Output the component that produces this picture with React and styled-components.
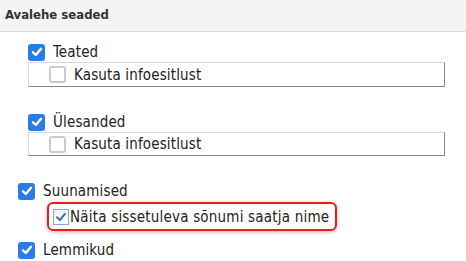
import React from "react";
import styled, { createGlobalStyle } from "styled-components";

const Global = createGlobalStyle`
  html, body { margin: 0; padding: 0; background: #fff; }
  body { font-family: "DejaVu Sans Condensed", "DejaVu Sans", sans-serif; color: #222; }
`;

const Page = styled.div`
  width: 466px;
  height: 261px;
  overflow: hidden;
  display: flex;
  flex-direction: column;
`;

const Header = styled.div`
  height: 32px;
  box-sizing: border-box;
  background: #f4f4f4;
  border-bottom: 1px solid #dcdcdc;
  display: flex;
  align-items: center;
  padding: 0 0 2px 5px;
  font-weight: bold;
  font-size: 13px;
  color: #333;
`;

const Content = styled.div`
  display: flex;
  flex-direction: column;
  padding: 10px 21px 0 18px;
`;

const Group = styled.div`
  display: flex;
  flex-direction: column;
  padding-left: 10px;
  margin-bottom: ${(p) => p.$gap || 0}px;
`;

const Row = styled.label`
  display: flex;
  align-items: center;
  height: 20px;
  gap: 8px;
  font-size: 15px;
  letter-spacing: 0.15px;
  margin-bottom: ${(p) => p.$gap || 0}px;
`;

const Box = styled.div`
  height: ${(p) => p.$h}px;
  box-sizing: border-box;
  border-top: 1px solid #dadada;
  border-left: 1px solid #dadada;
  border-right: 1px solid #888;
  border-bottom: 1px solid #888;
  display: flex;
  align-items: center;
  padding-left: 20px;
  gap: 8px;
  font-size: 15px;
  letter-spacing: 0.15px;
`;

const Check = styled.span`
  width: 17px;
  height: 17px;
  box-sizing: border-box;
  border-radius: 3px;
  flex: none;
  display: flex;
  align-items: center;
  justify-content: center;
  background: ${(p) => (p.$on ? "#2b7be6" : "#fff")};
  border: ${(p) => (p.$on ? "none" : "2px solid #cbcbcb")};
`;

const Highlight = styled.div`
  align-self: flex-start;
  margin-left: 29px;
  height: 29px;
  box-sizing: border-box;
  border: 2px solid #ee1c1c;
  border-radius: 6px;
  box-shadow: 0 1px 4px rgba(0, 0, 0, 0.3);
  display: flex;
  align-items: center;
  padding: 0 6px 0 4px;
  font-size: 15px;
  letter-spacing: 0.2px;
  margin-bottom: 9px;
`;

const ClassicCheck = styled.span`
  width: 16px;
  height: 16px;
  box-sizing: border-box;
  border: 1px solid #8da4c4;
  background: linear-gradient(#eef2f7, #ffffff);
  flex: none;
  display: flex;
  align-items: center;
  justify-content: center;
  margin-right: 1px;
`;

const Tick = ({ color = "#fff", w = 2.4 }) => (
  <svg width="12" height="12" viewBox="0 0 12 12">
    <path d="M2 6.3 L4.8 9 L10 2.8" fill="none" stroke={color} strokeWidth={w} strokeLinecap="round" strokeLinejoin="round" />
  </svg>
);

const CheckBox = ({ on }) => <Check $on={on}>{on && <Tick />}</Check>;

export default function App() {
  return (
    <Page>
      <Global />
      <Header>Avalehe seaded</Header>
      <Content>
        <Group $gap={25}>
          <Row>
            <CheckBox on />
            Teated
          </Row>
          <Box $h={25}>
            <CheckBox />
            Kasuta infoesitlust
          </Box>
        </Group>
        <Group $gap={25}>
          <Row>
            <CheckBox on />
            Ülesanded
          </Row>
          <Box $h={24}>
            <CheckBox />
            Kasuta infoesitlust
          </Box>
        </Group>
        <Row $gap={1}>
          <CheckBox on />
          Suunamised
        </Row>
        <Highlight>
          <ClassicCheck>
            <Tick color="#3670b8" w={2} />
          </ClassicCheck>
          Näita sissetuleva sõnumi saatja nime
        </Highlight>
        <Row>
          <CheckBox on />
          Lemmikud
        </Row>
      </Content>
    </Page>
  );
}
